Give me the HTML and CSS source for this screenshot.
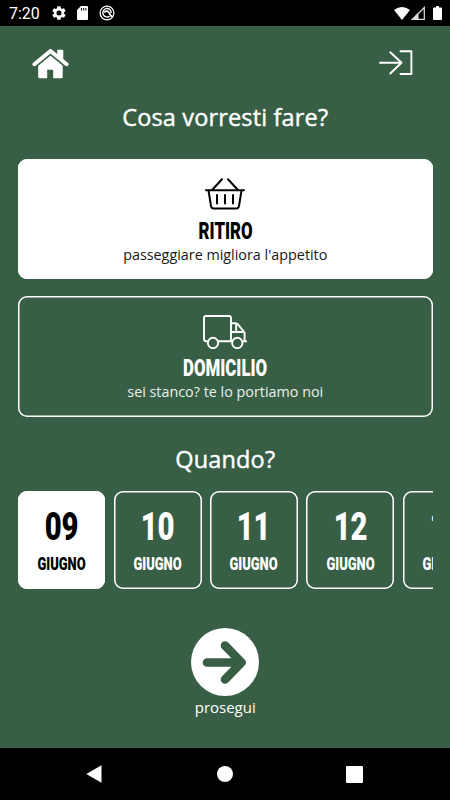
FILE: index.html
```html
<!DOCTYPE html>
<html lang="it">
    <head>
        <meta charset="UTF-8" />
        <meta name="viewport" content="width=device-width, initial-scale=1.0" />
        <title>Cosa vorresti fare?</title>
        <link rel="stylesheet" href="styles.css">
    </head>
    <body>
        <div class="status_bar">
            <span class="clock">7:20</span>
            <svg class="icon_gear" width="16" height="16" viewBox="0 0 24 24" fill="#fff">
                <path d="M19.4 13a7.500 7.500 0 0 0 0-2l2.200-1.700a.5.5 0 0 0 .1-.7l-2-3.500a.5.5 0 0 0-.7-.2l-2.500 1a7.500 7.500 0 0 0-1.700-1l-.4-2.600a.5.5 0 0 0-.5-.4h-4a.5.5 0 0 0-.5.4L9 4.900a7.500 7.500 0 0 0-1.700 1l-2.500-1a.5.5 0 0 0-.6.200l-2 3.500a.5.5 0 0 0 .1.700L4.500 11a7.500 7.500 0 0 0 0 2l-2.200 1.700a.5.5 0 0 0-.1.700l2 3.500a.5.5 0 0 0 .6.200l2.500-1a7.500 7.500 0 0 0 1.700 1l.4 2.600a.5.5 0 0 0 .5.400h4a.5.5 0 0 0 .5-.4l.4-2.600a7.500 7.500 0 0 0 1.700-1l2.500 1a.5.5 0 0 0 .7-.2l2-3.500a.5.5 0 0 0-.1-.7zM12 8.200a3.800 3.800 0 1 1 0 7.600 3.800 3.800 0 0 1 0-7.600z" fill-rule="evenodd" />
            </svg>
            <svg class="icon_card" width="11" height="14" viewBox="0 0 11 14">
                <path d="M4 0h6a1 1 0 0 1 1 1v12a1 1 0 0 1-1 1H1a1 1 0 0 1-1-1V4z" fill="#fff" />
                <path d="M4.500 2v2.500M6.700 2v2.500M8.900 2v2.500" stroke="#000" stroke-width="1" />
            </svg>
            <svg class="icon_app" width="16" height="16" viewBox="0 0 16 16" fill="none" stroke="#fff">
                <circle cx="8" cy="8" r="6.900" stroke-width="1.300" />
                <path d="M10.800 10.900A4.200 4.200 0 1 1 12.200 8" stroke-width="1.400" />
                <path d="M5.200 7.500Q7.500 5 9.500 7L13 12" stroke-width="1.700" />
            </svg>
            <svg class="icon_wifi" width="16" height="13" viewBox="0 0 16 13">
                <path d="M0 3Q8-3 16 3L8 13z" fill="#fff" />
            </svg>
            <svg class="icon_signal" width="14" height="14" viewBox="0 0 14 14">
                <path d="M1.500 13.300L13.300 1.500V13.300z" fill="none" stroke="#ddd" stroke-width="1.200" />
                <path d="M0 14L7.500 6.500V14z" fill="#ddd" />
            </svg>
            <svg class="icon_battery" width="9" height="14" viewBox="0 0 9 14">
                <path d="M3 0h3v1.500h2a1 1 0 0 1 1 1V13a1 1 0 0 1-1 1H1a1 1 0 0 1-1-1V2.500a1 1 0 0 1 1-1h2z" fill="#fff" />
            </svg>
        </div>

        <main>
            <header>
                <a href="#" aria-label="Home">
                    <svg width="37" height="30" viewBox="0 0 37 30">
                        <path d="M26 7V1.500h4.500V11z" fill="#fff" stroke="#fff" stroke-width="1.500" stroke-linejoin="round" />
                        <path d="M18.500 6L6.200 16.200V28q0 1.300 1.300 1.300h7.700v-8.500h6v8.500h8.200q1.300 0 1.300-1.300V16.200z" fill="#fff" />
                        <path d="M2.200 16.400L18.500 3.200 34.800 16.400" fill="none" stroke="#385f46" stroke-width="5.200" />
                        <path d="M2.400 15.200L18.500 2 34.600 15.200" fill="none" stroke="#fff" stroke-width="3.900" stroke-linecap="round" stroke-linejoin="round" />
                    </svg>
                </a>
                <a href="#" aria-label="Accedi">
                    <svg width="34" height="26" viewBox="0 0 34 26" fill="none" stroke="#fff" stroke-width="1.900" stroke-linecap="round" stroke-linejoin="round">
                        <path d="M1 13.700H22.500M11.300 3.200L22.500 13.700 11.300 24.500M21.500 2.300H32.400V25H21.500" />
                    </svg>
                </a>
            </header>

            <h1>Cosa vorresti fare?</h1>

            <button class="option selected">
                <svg width="40" height="32" viewBox="0 0 40 32" fill="none" stroke="#000" stroke-width="2" stroke-linecap="round" stroke-linejoin="round">
                    <path d="M1 12.300H39M3.500 12.500L6 28.200Q6.400 30.500 8.500 30.500H31.500Q33.600 30.500 34 28.200L36.500 12.500M7.500 11.500L17 1.200M32.500 11.500L23 1.200M12 17V25.500M20 17V25.500M28 17V25.500" />
                </svg>
                <strong>RITIRO</strong>
                <small>passeggiare migliora l'appetito</small>
            </button>

            <button class="option">
                <svg width="44" height="34" viewBox="0 0 44 34" fill="none" stroke="#fff" stroke-width="1.900" stroke-linecap="round" stroke-linejoin="round">
                    <path d="M4.500 26.300H3Q1 26.300 1 24.300V3Q1 1 3 1H26Q28 1 28 3V26.300M15.500 26.300H28M28 8.200H32Q34 8.200 35.200 9.600L41 16.800Q41.600 17.600 41.600 18.500V26.300M28 17H41M39.700 26.300H43.200M33.200 8.400V16.800" />
                    <circle cx="10" cy="28" r="5.200" />
                    <circle cx="34.300" cy="28" r="5.200" fill="#385f46" />
                </svg>
                <strong>DOMICILIO</strong>
                <small>sei stanco? te lo portiamo noi</small>
            </button>

            <h2>Quando?</h2>

            <div class="days">
                <button class="day selected"><b>09</b><span>GIUGNO</span></button>
                <button class="day"><b>10</b><span>GIUGNO</span></button>
                <button class="day"><b>11</b><span>GIUGNO</span></button>
                <button class="day"><b>12</b><span>GIUGNO</span></button>
                <button class="day"><b>13</b><span>GIUGNO</span></button>
            </div>

            <a class="next" href="#">
                <svg width="68" height="68" viewBox="0 0 68 68">
                    <circle cx="34" cy="34" r="34" fill="#fff" />
                    <path d="M16 34.500H49M34 17.500L50.500 34.500 34 51.500" fill="none" stroke="#385f46" stroke-width="8.700" stroke-linecap="round" stroke-linejoin="round" />
                </svg>
                <span>prosegui</span>
            </a>
        </main>

        <nav>
            <svg width="16" height="18" viewBox="0 0 16 18"><path d="M15.500.3V17.700L.3 9z" fill="#fff" /></svg>
            <svg width="16" height="16" viewBox="0 0 16 16"><circle cx="8" cy="8" r="8" fill="#fff" /></svg>
            <svg width="17" height="17" viewBox="0 0 17 17"><rect width="17" height="17" rx="1" fill="#fff" /></svg>
        </nav>
    </body>
</html>
```
FILE: styles.css
```css
* {
    box-sizing: border-box;
}

body {
    margin: 0;
    height: 800px;
    display: flex;
    flex-direction: column;
    overflow: hidden;
    font-family: "Open Sans", sans-serif;
    background: #385f46;
    color: white;
}

svg {
    display: block;
    flex: none;
}

a {
    color: white;
    text-decoration: none;
}

.status_bar {
    height: 26px;
    display: flex;
    align-items: center;
    padding: 0 8px 0 9px;
    background: black;
}

.clock {
    width: 42px;
    font-family: "Roboto", sans-serif;
    font-size: 16px;
    line-height: 26px;
    padding-top: 2px;
}

.icon_card {
    margin-left: 10px;
}

.icon_app {
    margin-left: 11px;
}

.icon_wifi {
    margin-left: auto;
}

.icon_signal {
    margin-left: 1px;
}

.icon_battery {
    margin-left: 8px;
}

main {
    flex: 1;
    padding: 0 17px 0 17.500px;
}

header {
    height: 74px;
    display: flex;
    justify-content: space-between;
    padding: 23px 20px 0 14px;
}

h1,
h2 {
    margin: 0;
    font-size: 23.500px;
    font-weight: 500;
    line-height: 34px;
    letter-spacing: 0.15px;
    text-align: center;
    -webkit-text-stroke: 0.4px white;
}

h1 {
    margin-bottom: 24.500px;
}

.option,
.day {
    display: flex;
    flex-direction: column;
    align-items: center;
    font-family: inherit;
    color: white;
    background: none;
    border: none;
    box-shadow: inset 0 0 0 1.500px white;
    border-radius: 9px;
    cursor: pointer;
}

.option {
    width: 100%;
    height: 120.500px;
    padding: 19px 0 0;
    margin-bottom: 17px;
}

.option.selected,
.day.selected {
    background: white;
    color: black;
}

.option svg {
    margin-bottom: 6px;
}

.option:not(.selected) svg {
    margin-bottom: 4px;
}

/* narrow headings */
.option strong,
.day b,
.day span {
    font-family: "Roboto", sans-serif;
    font-weight: 900;
    transform: scaleX(0.7);
}

.option strong {
    font-size: 24px;
    line-height: 30px;
}

.option small {
    margin-top: -1px;
    font-size: 14.350px;
    line-height: 20px;
    opacity: 0.9;
}

h2 {
    margin-top: 25px;
    margin-bottom: 15px;
}

.days {
    display: flex;
    gap: 8.500px;
    overflow: hidden;
}

.day {
    flex: none;
    width: 87.800px;
    height: 98px;
    padding: 15px 0 0;
}

.day b {
    font-size: 39px;
    line-height: 42px;
    transform: scaleX(0.75);
}

.day span {
    font-size: 18px;
    line-height: 31px;
    transform: scaleX(0.72);
}

.next {
    display: flex;
    flex-direction: column;
    align-items: center;
    margin-top: 39px;
    font-size: 15px;
    line-height: 22px;
}

nav {
    height: 52px;
    display: flex;
    align-items: center;
    justify-content: space-between;
    padding: 0 87px 0 86px;
    background: black;
}

nav svg:nth-child(2) {
    margin-left: 2px;
}
```
